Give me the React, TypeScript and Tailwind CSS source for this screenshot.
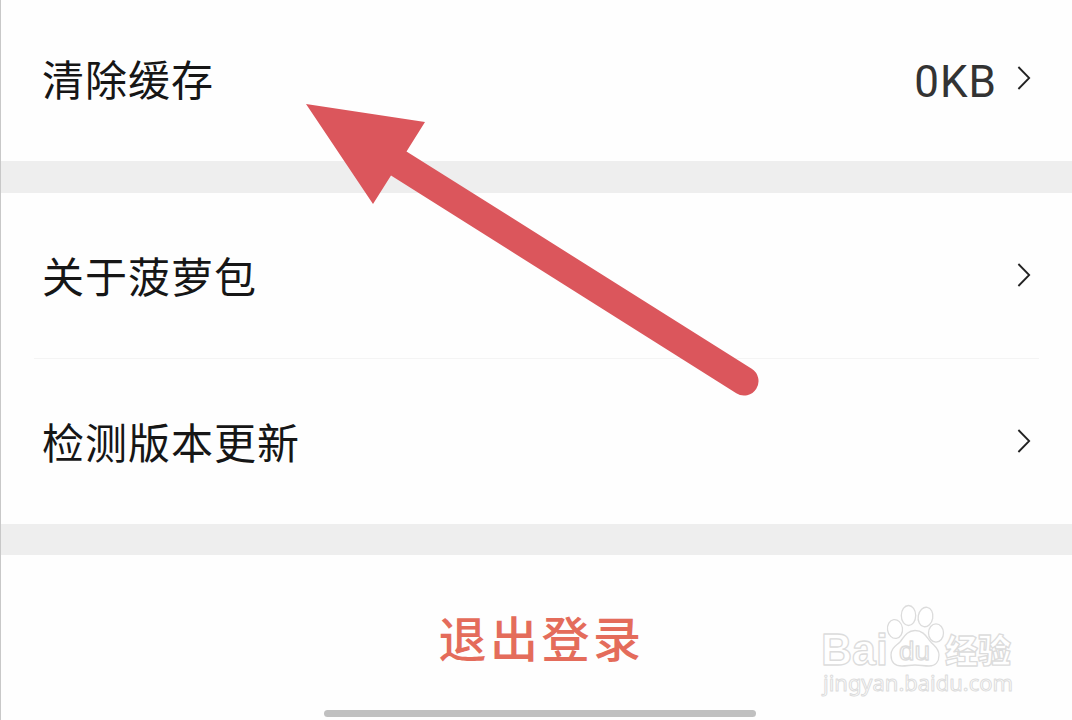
import React from "react";

function Chevron({ className = "" }: { className?: string }) {
  return (
    <svg className={`h-7 w-4 shrink-0 ${className}`} viewBox="0 0 16 28" fill="none">
      <path d="M2.4 3L13.2 14L2.4 25" stroke="currentColor" strokeWidth="1.8" />
    </svg>
  );
}

function Row({ label, value, className }: { label: string; value?: string; className: string }) {
  return (
    <div className={`flex items-center justify-between pl-[41px] pr-[40px] ${className}`}>
      <span className="text-[42px] leading-[60px] tracking-[1px] text-[#161616]">{label}</span>
      <span className="flex items-center">
        {value && (
          <span className="mr-[19px] mt-[8px] font-[Roboto,sans-serif] text-[44px] leading-[52px] tracking-[1px] text-[#333333]">
            {value}
          </span>
        )}
        <Chevron className="text-[#222222]" />
      </span>
    </div>
  );
}

function Arrow() {
  return (
    <svg className="pointer-events-none absolute left-0 top-0" width="1072" height="720" viewBox="0 0 1072 720">
      <path
        d="M306 104L425 122L406.5 151.5L751.7 368.7A14.5 14.5 0 0 1 736.3 393.3L391 175.5L373 204Z"
        fill="#db565c"
      />
    </svg>
  );
}

function Watermark() {
  return (
    <svg
      className="absolute left-[800px] top-[590px]"
      width="240"
      height="130"
      viewBox="0 0 240 130"
      fill="#ffffff"
      stroke="#dcdcdc"
      strokeWidth="1.3"
      strokeLinejoin="round"
    >
      <text x="21" y="75" fontFamily="Liberation Sans, sans-serif" fontWeight="700" fontSize="45" textLength="67" lengthAdjust="spacingAndGlyphs">
        Bai
      </text>
      <ellipse cx="95" cy="39" rx="7.5" ry="9.5" transform="rotate(-8 95 39)" />
      <ellipse cx="108.5" cy="25.5" rx="7.2" ry="10" />
      <ellipse cx="125.5" cy="27" rx="7.3" ry="9.8" transform="rotate(10 125.5 27)" />
      <ellipse cx="136" cy="43" rx="7.5" ry="9.2" />
      <path d="M115 40.5C107 40.5 104 47 100 52C96 56 91 58 91 65C91 72 95 76 102 76C107 76 110 75 115 75C120 75 124 76 129 76C136 76 139 71 139 65C139 58 134 56 130 51C126 46 123 40.5 115 40.5Z" />
      <text x="99" y="70" fontFamily="Liberation Sans, sans-serif" fontSize="26" textLength="31" lengthAdjust="spacingAndGlyphs">
        du
      </text>
      <text x="145" y="73" fontFamily="Noto Sans CJK SC, sans-serif" fontWeight="900" fontSize="33" textLength="66">
        经验
      </text>
      <text x="23" y="101" fontFamily="Noto Sans, sans-serif" fontSize="22" textLength="190" lengthAdjust="spacingAndGlyphs" strokeWidth="1">
        jingyan.baidu.com
      </text>
    </svg>
  );
}

export default function App() {
  return (
    <main className="relative flex h-[720px] w-[1072px] flex-col overflow-hidden border-l border-[#c8c8c8] bg-[#fefefe] font-['Noto_Sans_CJK_SC',sans-serif]">
      <Row label="清除缓存" value="0KB" className="h-[161px] shrink-0 pb-[6px]" />
      <div className="h-8 shrink-0 bg-[#eeeeee]" />
      <Row label="关于菠萝包" className="h-[165px] shrink-0 pb-[2px]" />
      <div className="mx-[33px] h-px shrink-0 bg-[#f4f4f4]" />
      <Row label="检测版本更新" className="h-[165px] shrink-0 pb-[2px]" />
      <div className="h-[31px] shrink-0 bg-[#eeeeee]" />
      <div className="flex flex-1 flex-col items-center pl-[7px]">
        <button className="mt-[45px] pl-[3px] text-[48px] font-medium leading-[72px] tracking-[3.5px] text-[#e46c5b]">退出登录</button>
        <div className="mb-[3px] mt-auto h-[7px] w-[432px] rounded-full bg-[#c0c0c0]" />
      </div>
      <div className="absolute -left-px top-0">
        <Arrow />
        <Watermark />
      </div>
    </main>
  );
}
